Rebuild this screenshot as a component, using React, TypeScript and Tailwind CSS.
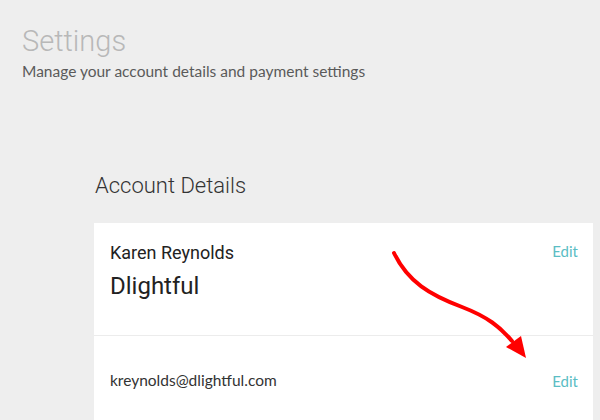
import React from 'react';

const roboto = { fontFamily: 'Roboto, "Liberation Sans", sans-serif' };
const sans = { fontFamily: 'Lato, "Open Sans", sans-serif' };

const Arrow = () => (
    <svg className="absolute left-0 top-0 pointer-events-none" width="600" height="420" viewBox="0 0 600 420">
        <path d="M394 253 C 408 282, 430 295, 462 307 C 488 317, 500 327, 512 341" fill="none" stroke="#ff0000" strokeWidth="4" strokeLinecap="round" />
        <polygon points="506,347 521,336 526,358" fill="#ff0000" />
    </svg>
);

export default function App() {
    return (
        <div className="relative w-[600px] h-[420px] overflow-hidden bg-[#eeeeee]">
            <div className="pl-[22px] pt-[23px]">
                <h1 className="text-[29px] leading-[36px] font-light text-[#b8b8b8]" style={roboto}>Settings</h1>
                <p className="text-[15.5px] leading-[20px] text-[#5a5a5a] mt-[2px]" style={sans}>
                    Manage your account details and payment settings
                </p>
            </div>
            <div className="ml-[94px] mr-[7px] mt-[90px]">
                <h2 className="text-[22px] leading-[30px] font-light text-[#333333] pl-[1px]" style={roboto}>Account Details</h2>
                <div className="mt-[22px] bg-white">
                    <div className="flex justify-between pl-[16px] pr-[15px] pt-[18px] h-[113px] border-b border-[#ececec]">
                        <div style={roboto}>
                            <div className="text-[18px] leading-[24px] text-[#222222]">Karen Reynolds</div>
                            <div className="text-[24px] leading-[30px] text-[#222222] mt-[6px]">Dlightful</div>
                        </div>
                        <a className="text-[15px] leading-[20px] text-[#5bbdc4]" style={sans}>Edit</a>
                    </div>
                    <div className="flex justify-between items-center pl-[16px] pr-[15px] h-[90px]" style={sans}>
                        <span className="text-[15.5px] text-[#333333]">kreynolds@dlightful.com</span>
                        <a className="text-[15px] text-[#5bbdc4]">Edit</a>
                    </div>
                </div>
            </div>
            <Arrow />
        </div>
    );
}
